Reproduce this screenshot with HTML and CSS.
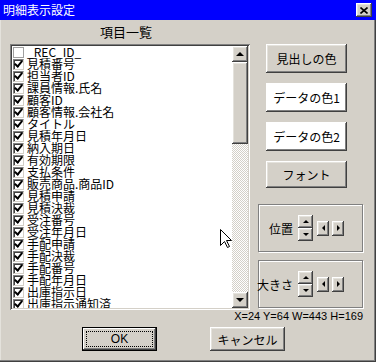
FILE: index.html
```html
<!DOCTYPE html>
<html lang="ja">
<head>
<meta charset="utf-8">
<title>明細表示設定</title>
<link rel="stylesheet" href="styles.css">
</head>
<body>
<div class="window">
  <div class="titlebar">
    <span class="title">明細表示設定</span>
    <button class="close raised" aria-label="閉じる">
      <svg width="8" height="7" viewBox="0 0 8 7"><path d="M0.5 0.5 L7.5 6.5 M7.5 0.5 L0.5 6.5" stroke="#000" stroke-width="1.6" fill="none"/></svg>
    </button>
  </div>
  <div class="client">
    <div class="main">
      <div class="leftcol">
        <div class="caption">項目一覧</div>
        <div class="listbox">
          <ul class="items">
            <li><span class="cb off"></span>_REC_ID_</li>
            <li><span class="cb on"></span>見積番号</li>
            <li><span class="cb on"></span>担当者ID</li>
            <li><span class="cb on"></span>課員情報.氏名</li>
            <li><span class="cb on"></span>顧客ID</li>
            <li><span class="cb on"></span>顧客情報.会社名</li>
            <li><span class="cb on"></span>タイトル</li>
            <li><span class="cb on"></span>見積年月日</li>
            <li><span class="cb on"></span>納入期日</li>
            <li><span class="cb on"></span>有効期限</li>
            <li><span class="cb on"></span>支払条件</li>
            <li><span class="cb on"></span>販売商品.商品ID</li>
            <li><span class="cb on"></span>見積申請</li>
            <li><span class="cb on"></span>見積決裁</li>
            <li><span class="cb on"></span>受注番号</li>
            <li><span class="cb on"></span>受注年月日</li>
            <li><span class="cb on"></span>手配申請</li>
            <li><span class="cb on"></span>手配決裁</li>
            <li><span class="cb on"></span>手配番号</li>
            <li><span class="cb on"></span>手配年月日</li>
            <li><span class="cb on"></span>出庫指示日</li>
            <li><span class="cb on"></span>出庫指示通知済</li>
          </ul>
          <div class="scrollbar">
            <div class="sb-btn raised"><span class="tri-up big"></span></div>
            <div class="sb-track"><div class="sb-thumb raised"></div></div>
            <div class="sb-btn raised"><span class="tri-down big"></span></div>
          </div>
        </div>
      </div>
      <div class="rightcol">
        <div class="btns">
          <button class="btn">見出しの色</button>
          <button class="btn white">データの色1</button>
          <button class="btn white">データの色2</button>
          <button class="btn short">フォント</button>
        </div>
        <div class="group first">
          <span class="g-label">位置</span>
          <div class="updown">
            <span class="spin raised"><span class="tri-up"></span></span>
            <span class="spin raised"><span class="tri-down"></span></span>
          </div>
          <div class="lr">
            <span class="side raised"><span class="tri-left"></span></span>
            <span class="side raised"><span class="tri-right"></span></span>
          </div>
        </div>
        <div class="group second">
          <span class="g-label">大きさ</span>
          <div class="updown">
            <span class="spin raised"><span class="tri-up"></span></span>
            <span class="spin raised"><span class="tri-down"></span></span>
          </div>
          <div class="lr">
            <span class="side raised"><span class="tri-left"></span></span>
            <span class="side raised"><span class="tri-right"></span></span>
          </div>
        </div>
      </div>
    </div>
    <div class="status">X=24 Y=64 W=443 H=169</div>
    <div class="actions">
      <button class="btn action default"><span class="focus">OK</span></button>
      <button class="btn action">キャンセル</button>
    </div>
  </div>
  <svg class="cursor" width="12" height="20" viewBox="0 0 12 20">
    <path d="M0.5 0.5 L0.5 16.5 L4.5 12.5 L7.5 18.5 L9.5 17.5 L6.5 11.5 L11.5 11.5 Z" fill="#fff" stroke="#000" stroke-width="1"/>
  </svg>
</div>
</body>
</html>
```

FILE: styles.css
```css
html, body {
  margin: 0;
  padding: 0;
  background: #d4d0c8;
}

.window {
  position: relative;
  width: 376px;
  height: 362px;
  background: #d4d0c8;
  display: flex;
  flex-direction: column;
  overflow: hidden;
  font-family: "Noto Sans CJK JP", "Liberation Sans", sans-serif;
  color: #000;
}

.raised {
  background: #d4d0c8;
  box-shadow: inset -1px -1px #404040, inset 1px 1px #ffffff, inset -2px -2px #808080, inset 2px 2px #e4e2dc;
}

/* title bar */
.titlebar {
  height: 20px;
  flex: none;
  background: #0000ff;
  display: flex;
  align-items: center;
  justify-content: space-between;
  padding: 0 4px 0 3px;
}
.title {
  color: #fff;
  font-size: 12px;
  line-height: 20px;
}
.close {
  width: 16px;
  height: 14px;
  border: 0;
  padding: 0;
  display: flex;
  align-items: center;
  justify-content: center;
}
.close svg { display: block; }

/* client */
.client {
  flex: 1;
  display: flex;
  flex-direction: column;
  box-shadow: inset -1px -1px #404040, inset -2px -2px #808080, inset 1px 0 0 #e4e2dc;
}
.main {
  display: flex;
  padding-left: 10px;
}
.leftcol {
  width: 240px;
  display: flex;
  flex-direction: column;
}
.caption {
  height: 24px;
  line-height: 24px;
  text-align: center;
  font-size: 13px;
  padding-right: 8px;
}
.listbox {
  height: 266px;
  box-sizing: border-box;
  background: #fff;
  padding: 2px;
  display: flex;
  box-shadow: inset 1px 1px #808080, inset -1px -1px #ffffff, inset 2px 2px #404040, inset -2px -2px #d4d0c8;
}
.items {
  flex: 1;
  margin: 0;
  padding: 0;
  list-style: none;
  overflow: hidden;
}
.items li {
  height: 12px;
  display: flex;
  align-items: center;
  font-size: 12px;
  line-height: 12px;
  white-space: nowrap;
}
.cb {
  position: relative;
  flex: none;
  width: 11px;
  height: 11px;
  box-sizing: border-box;
  margin: 0 3px 0 1px;
  background: #fff;
  border: 1px solid;
  border-color: #808080 #d4d0c8 #d4d0c8 #808080;
  box-shadow: inset 1px 1px #404040;
}
.cb.off {
  border-color: #a0a0a0;
  box-shadow: none;
}
.cb.on::after {
  content: "";
  position: absolute;
  left: 2px;
  top: -1px;
  width: 3px;
  height: 6px;
  border: solid #000;
  border-width: 0 2px 2px 0;
  transform: rotate(40deg);
}

/* scrollbar */
.scrollbar {
  width: 16px;
  display: flex;
  flex-direction: column;
}
.sb-btn {
  height: 16px;
  flex: none;
  display: flex;
  align-items: center;
  justify-content: center;
}
.sb-track {
  flex: 1;
  background-image: conic-gradient(#ffffff 25%, #d4d0c8 0 50%, #ffffff 0 75%, #d4d0c8 0);
  background-size: 2px 2px;
}
.sb-thumb {
  height: 82px;
}

/* triangles */
.tri-up, .tri-down, .tri-left, .tri-right {
  width: 0;
  height: 0;
  border: solid transparent;
}
.tri-up { border-width: 0 3px 3px; border-bottom-color: #000; }
.tri-down { border-width: 3px 3px 0; border-top-color: #000; }
.tri-left { border-width: 3px 3px 3px 0; border-right-color: #000; }
.tri-right { border-width: 3px 0 3px 3px; border-left-color: #000; }
.tri-up.big { border-width: 0 4px 4px; margin-top: -1px; }
.tri-down.big { border-width: 4px 4px 0; }

/* right column */
.rightcol {
  width: 105px;
  margin-left: 8px;
  padding-top: 24px;
  display: flex;
  flex-direction: column;
}
.btns {
  display: flex;
  flex-direction: column;
  gap: 10px;
  padding-left: 8px;
  width: 81px;
}
.btn {
  border: 0;
  padding: 0;
  height: 29px;
  font-family: "Noto Sans CJK JP", "Liberation Sans", sans-serif;
  font-size: 12px;
  color: #000;
  background: #d4d0c8;
  box-shadow: inset -1px -1px #404040, inset 1px 1px #ffffff, inset -2px -2px #808080, inset 2px 2px #e4e2dc;
}
.btn.white {
  background: #fff;
  box-shadow: inset -1px -1px #404040, inset 1px 1px #ffffff, inset -2px -2px #808080, inset 2px 2px #ffffff;
}
.btn.short { height: 27px; }

.group {
  height: 48px;
  box-sizing: border-box;
  border: 1px solid #808080;
  box-shadow: inset 1px 1px #fff, 1px 1px #fff;
  display: flex;
  align-items: center;
}
.group.first { margin-top: 16px; }
.group.second { margin-top: 8px; }
.g-label {
  width: 39px;
  box-sizing: border-box;
  padding-right: 5px;
  text-align: right;
  white-space: nowrap;
  font-size: 12px;
  direction: rtl;
}
.updown {
  display: flex;
  flex-direction: column;
}
.spin {
  width: 15px;
  height: 13px;
  display: flex;
  align-items: center;
  justify-content: center;
}
.lr {
  display: flex;
  gap: 3px;
  margin-left: 4px;
}
.side {
  width: 12px;
  height: 15px;
  display: flex;
  align-items: center;
  justify-content: center;
}

/* status & actions */
.status {
  height: 13px;
  line-height: 13px;
  font-family: "Liberation Sans", Arial, sans-serif;
  font-size: 11px;
  text-align: right;
  padding-right: 13px;
}
.actions {
  display: flex;
  gap: 53px;
  padding-left: 82px;
  margin-top: 4px;
}
.btn.action {
  width: 75px;
  height: 24px;
}
.btn.default {
  display: flex;
  padding: 1px;
  box-sizing: border-box;
  background: #d4d0c8;
  box-shadow: inset 0 0 0 1px #000, inset -2px -2px #404040, inset 2px 2px #ffffff, inset -3px -3px #808080;
}
.focus {
  flex: 1;
  margin: 3px;
  border: 1px dotted #000;
  display: flex;
  align-items: center;
  justify-content: center;
  font-family: "Liberation Sans", Arial, sans-serif;
  font-size: 12px;
}

.cursor {
  position: absolute;
  left: 220px;
  top: 229px;
}
```
